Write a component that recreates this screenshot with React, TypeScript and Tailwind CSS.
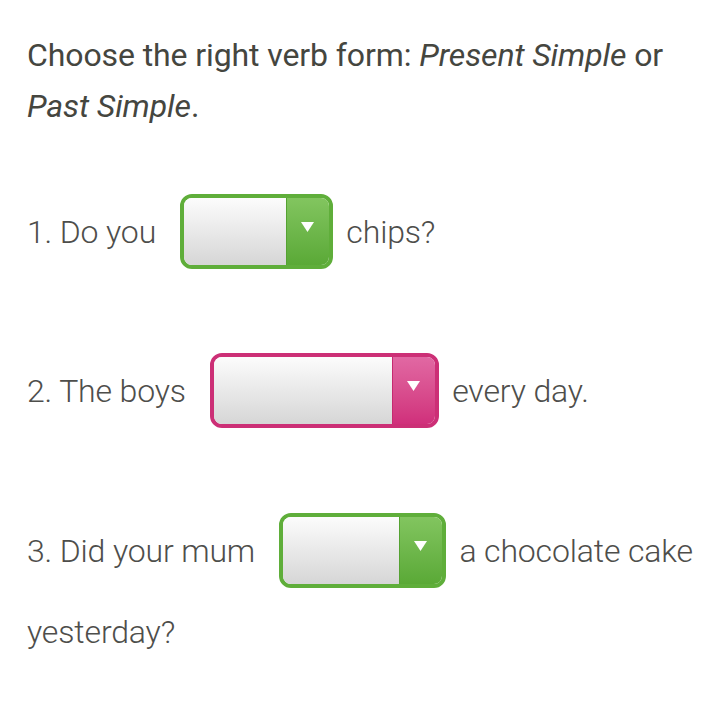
import React from "react";

function Select({ width, color }: { width: number; color: "green" | "pink" }) {
  const border = color === "green" ? "border-[#5fae3a]" : "border-[#cc2f76]";
  const btn =
    color === "green"
      ? "bg-gradient-to-b from-[#82c55f] to-[#5aa936] border-l-[#55a232]"
      : "bg-gradient-to-b from-[#e168a3] to-[#d02f7b] border-l-[#c52a70]";
  return (
    <span
      className={`relative top-[-3px] inline-flex align-middle h-[75px] rounded-[12px] border-4 ${border} overflow-hidden`}
      style={{ width }}
    >
      <span className="flex-1 bg-gradient-to-b from-[#fcfcfc] to-[#d6d6d6]" />
      <span className={`w-[43px] flex items-start justify-center pt-[24px] border-l ${btn}`}>
        <svg width="13" height="10" viewBox="0 0 13 10">
          <polygon points="0,0 13,0 6.5,10" fill="#ffffff" />
        </svg>
      </span>
    </span>
  );
}

export default function App() {
  return (
    <div
      className="w-[711px] h-[710px] bg-white pl-[27px] pr-[10px] pt-[30px] text-[#4f4f4a]"
      style={{ fontFamily: "Roboto, 'Liberation Sans', sans-serif" }}
    >
      <p className="text-[32px] leading-[51px] text-[#45463f] tracking-[-0.1px]">
        Choose the right verb form: <i>Present Simple</i> or <i>Past Simple</i>.
      </p>
      <div className="mt-[60px] text-[32px] leading-[81px] font-light tracking-[-0.15px] text-[#4e4e4b]">
        <p>
          1. Do you <span className="inline-block w-[16px]" />
          <Select width={153} color="green" />
          <span className="inline-block w-[6px]" /> chips?
        </p>
        <p className="mt-[78px]">
          2. The boys <span className="inline-block w-[16px]" />
          <Select width={229} color="pink" />
          <span className="inline-block w-[6px]" /> every day.
        </p>
        <p className="mt-[79px]">
          3. Did your mum <span className="inline-block w-[16px]" />
          <Select width={167} color="green" />
          <span className="inline-block w-[6px]" /> a chocolate cake yesterday?
        </p>
      </div>
    </div>
  );
}
